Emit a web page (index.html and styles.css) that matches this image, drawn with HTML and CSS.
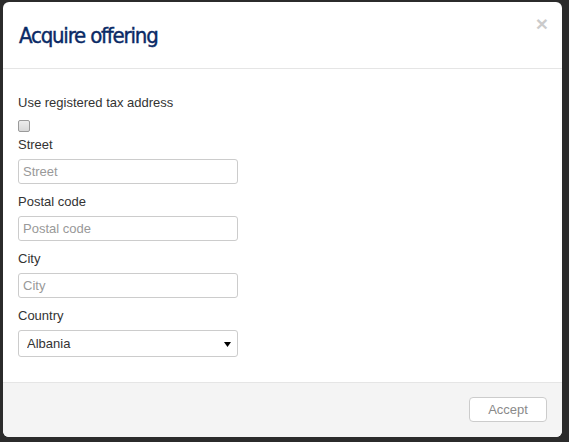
FILE: index.html
```html
<!DOCTYPE html>
<html>
<head>
<meta charset="utf-8">
<link rel="stylesheet" href="styles.css">
</head>
<body>
<div class="modal">
  <div class="modal-header">
    <h4 class="modal-title">Acquire offering</h4>
    <button class="close" type="button">×</button>
  </div>
  <div class="modal-body">
    <label class="lbl">Use registered tax address</label>
    <input class="check" type="checkbox">
    <label class="lbl">Street</label>
    <input class="field" type="text" placeholder="Street">
    <label class="lbl">Postal code</label>
    <input class="field" type="text" placeholder="Postal code">
    <label class="lbl">City</label>
    <input class="field" type="text" placeholder="City">
    <label class="lbl">Country</label>
    <div class="select-wrap">
      <select class="select">
        <option>Albania</option>
      </select>
      <svg class="arrow" width="7" height="5" viewBox="0 0 7 5"><path d="M0 0H7L3.5 5Z" fill="#000"/></svg>
    </div>
  </div>
  <div class="modal-footer">
    <button class="btn" type="button">Accept</button>
  </div>
</div>
</body>
</html>
```

FILE: styles.css
```css
html, body {
  margin: 0;
  padding: 0;
}
body {
  background: #2b2b2b;
  width: 569px;
  height: 442px;
  overflow: hidden;
  font-family: "Liberation Sans", Arial, sans-serif;
  font-size: 13px;
  color: #333;
}
.modal {
  position: relative;
  margin: 2px 0 0 3px;
  width: 559px;
  height: 435px;
  background: #fff;
  border-radius: 6px;
  display: flex;
  flex-direction: column;
  overflow: hidden;
}
.modal-header {
  height: 66px;
  box-sizing: content-box;
  border-bottom: 1px solid #e5e5e5;
  padding: 0 15px;
}
.modal-title {
  margin: 22px 0 0 1px;
  font-family: "DejaVu Sans Condensed", "DejaVu Sans", sans-serif;
  font-stretch: semi-condensed;
  font-weight: normal;
  font-size: 22px;
  line-height: 24px;
  letter-spacing: -1.2px;
  -webkit-text-stroke: 0.4px #0a2a66;
  color: #0a2a66;
}
.close {
  position: absolute;
  top: 11px;
  right: 14px;
  padding: 0;
  border: 0;
  background: transparent;
  font-family: "Liberation Sans", Arial, sans-serif;
  font-size: 21px;
  font-weight: bold;
  line-height: 21px;
  color: #000;
  opacity: 0.2;
}
.modal-body {
  flex: 1;
  padding: 25px 15px 0;
}
.lbl {
  display: block;
  line-height: 18px;
  margin-bottom: 5px;
}
.check {
  display: block;
  appearance: none;
  -webkit-appearance: none;
  width: 12px;
  height: 12px;
  margin: 8px 0 4px 0;
  box-sizing: border-box;
  border: 1px solid #9a9a9a;
  border-radius: 2px;
  background: linear-gradient(#ececec, #d8d8d8);
}
.field {
  display: block;
  box-sizing: border-box;
  width: 220px;
  height: 25px;
  margin: 0 0 9px 0;
  padding: 0 4px;
  border: 1px solid #ccc;
  border-radius: 3px;
  font-family: "Liberation Sans", Arial, sans-serif;
  font-size: 13px;
  color: #555;
  outline: none;
}
.field::placeholder {
  color: #999;
}
.select-wrap {
  position: relative;
  width: 220px;
}
.select {
  display: block;
  appearance: none;
  -webkit-appearance: none;
  box-sizing: border-box;
  width: 220px;
  height: 27px;
  margin-top: 1px;
  padding: 0 8px;
  border: 1px solid #ccc;
  border-radius: 3px;
  background: #fff;
  font-family: "Liberation Sans", Arial, sans-serif;
  font-size: 13px;
  color: #333;
}
.arrow {
  position: absolute;
  right: 7px;
  top: 12px;
}
.modal-footer {
  border-top: 1px solid #e5e5e5;
  background: #f4f4f4;
  padding: 14px 15px 15px;
  display: flex;
  justify-content: flex-end;
}
.btn {
  width: 78px;
  height: 25px;
  padding: 0;
  border: 1px solid #ccc;
  border-radius: 4px;
  background: #fff;
  font-family: "Liberation Sans", Arial, sans-serif;
  font-size: 13px;
  color: #8a8a8a;
}
```
